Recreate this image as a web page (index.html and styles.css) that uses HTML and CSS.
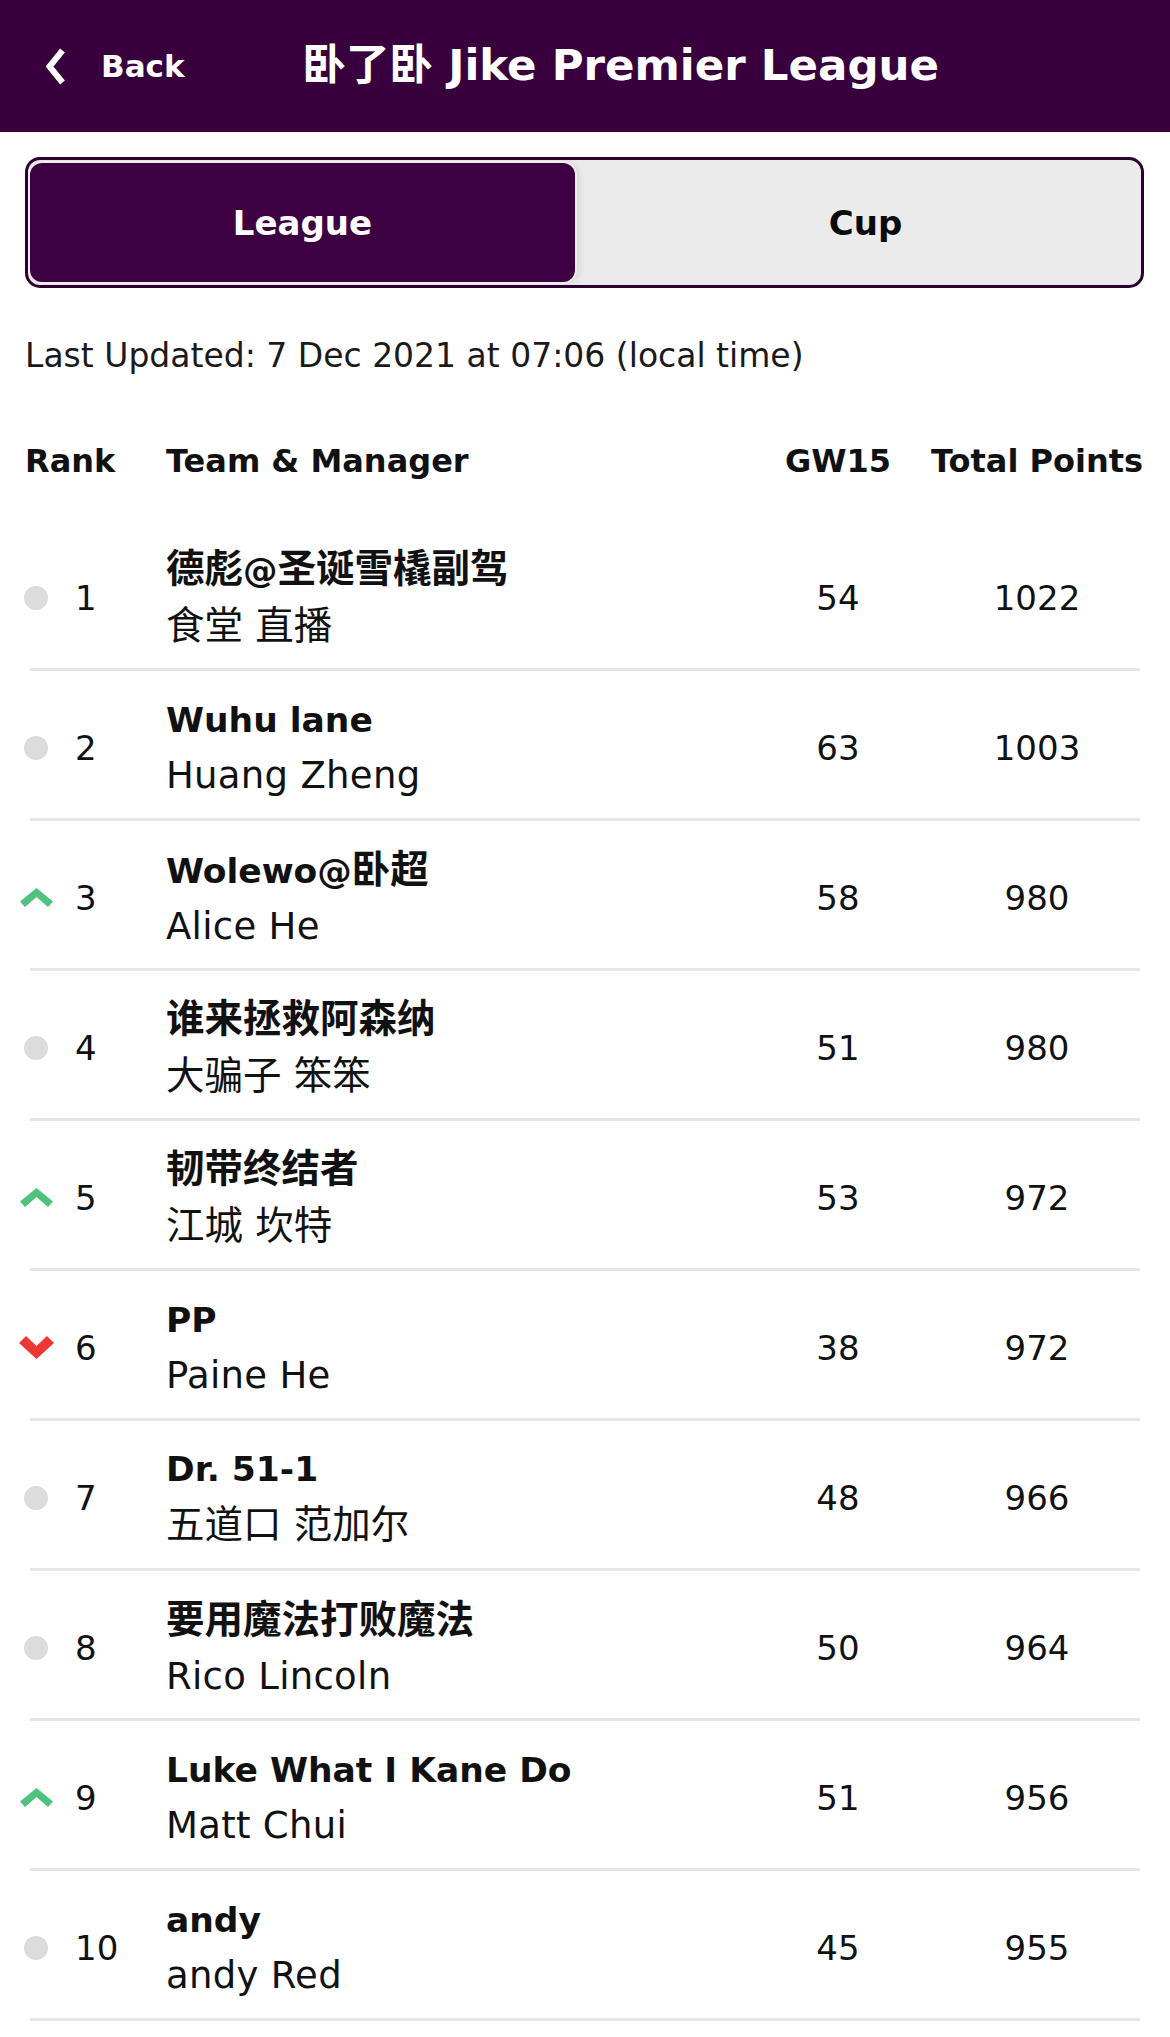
FILE: index.html
```html
<!DOCTYPE html>
<html lang="zh-CN">
<head>
<meta charset="utf-8">
<title>卧了卧 Jike Premier League</title>
<link rel="stylesheet" href="styles.css">
</head>
<body>
<header class="topbar">
  <a class="back" href="#">
    <svg class="back-icon" width="19" height="37" viewBox="0 0 19 37"><polyline points="16.5,2.5 3.5,18.5 16.5,34.5" fill="none" stroke="#fff" stroke-width="6"/></svg>
    <span>Back</span>
  </a>
  <h1 class="title">卧了卧 Jike Premier League</h1>
</header>

<main class="page">
  <div class="toggle">
    <div class="tab tab-active">League</div>
    <div class="tab tab-cup">Cup</div>
  </div>

  <p class="updated">Last Updated: 7 Dec 2021 at 07:06 (local time)</p>

  <div class="thead">
    <div class="c-rank">Rank</div>
    <div class="c-team">Team &amp; Manager</div>
    <div class="c-gw">GW15</div>
    <div class="c-tp">Total Points</div>
  </div>

  <div class="rows">
    <div class="row">
      <div class="c-rank"><span class="mv"><span class="dot"></span></span><span class="num">1</span></div>
      <div class="c-team"><div class="team"><span class="zh">德彪</span>@<span class="zh">圣诞雪橇副驾</span></div><div class="mgr"><span class="zh">食堂 直播</span></div></div>
      <div class="c-gw">54</div>
      <div class="c-tp">1022</div>
    </div>
    <div class="row">
      <div class="c-rank"><span class="mv"><span class="dot"></span></span><span class="num">2</span></div>
      <div class="c-team"><div class="team">Wuhu lane</div><div class="mgr">Huang Zheng</div></div>
      <div class="c-gw">63</div>
      <div class="c-tp">1003</div>
    </div>
    <div class="row">
      <div class="c-rank"><span class="mv"><svg width="33" height="19" viewBox="0 0 33 19"><polygon points="16.5,0 33,13.5 28,19 16.5,9 5,19 0,13.5" fill="#4fc27d"/></svg></span><span class="num">3</span></div>
      <div class="c-team"><div class="team">Wolewo@<span class="zh">卧超</span></div><div class="mgr">Alice He</div></div>
      <div class="c-gw">58</div>
      <div class="c-tp">980</div>
    </div>
    <div class="row">
      <div class="c-rank"><span class="mv"><span class="dot"></span></span><span class="num">4</span></div>
      <div class="c-team"><div class="team"><span class="zh">谁来拯救阿森纳</span></div><div class="mgr"><span class="zh">大骗子 笨笨</span></div></div>
      <div class="c-gw">51</div>
      <div class="c-tp">980</div>
    </div>
    <div class="row">
      <div class="c-rank"><span class="mv"><svg width="33" height="19" viewBox="0 0 33 19"><polygon points="16.5,0 33,13.5 28,19 16.5,9 5,19 0,13.5" fill="#4fc27d"/></svg></span><span class="num">5</span></div>
      <div class="c-team"><div class="team"><span class="zh">韧带终结者</span></div><div class="mgr"><span class="zh">江城 坎特</span></div></div>
      <div class="c-gw">53</div>
      <div class="c-tp">972</div>
    </div>
    <div class="row">
      <div class="c-rank"><span class="mv"><svg width="35" height="23" viewBox="0 0 35 23"><polygon points="0,7 7,0 17.5,10 28,0 35,7 17.5,23" fill="#ee3632"/></svg></span><span class="num">6</span></div>
      <div class="c-team"><div class="team">PP</div><div class="mgr">Paine He</div></div>
      <div class="c-gw">38</div>
      <div class="c-tp">972</div>
    </div>
    <div class="row">
      <div class="c-rank"><span class="mv"><span class="dot"></span></span><span class="num">7</span></div>
      <div class="c-team"><div class="team">Dr. 51-1</div><div class="mgr"><span class="zh">五道口 范加尔</span></div></div>
      <div class="c-gw">48</div>
      <div class="c-tp">966</div>
    </div>
    <div class="row">
      <div class="c-rank"><span class="mv"><span class="dot"></span></span><span class="num">8</span></div>
      <div class="c-team"><div class="team"><span class="zh">要用魔法打败魔法</span></div><div class="mgr">Rico Lincoln</div></div>
      <div class="c-gw">50</div>
      <div class="c-tp">964</div>
    </div>
    <div class="row">
      <div class="c-rank"><span class="mv"><svg width="33" height="19" viewBox="0 0 33 19"><polygon points="16.5,0 33,13.5 28,19 16.5,9 5,19 0,13.5" fill="#4fc27d"/></svg></span><span class="num">9</span></div>
      <div class="c-team"><div class="team">Luke What I Kane Do</div><div class="mgr">Matt Chui</div></div>
      <div class="c-gw">51</div>
      <div class="c-tp">956</div>
    </div>
    <div class="row">
      <div class="c-rank"><span class="mv"><span class="dot"></span></span><span class="num">10</span></div>
      <div class="c-team"><div class="team">andy</div><div class="mgr">andy Red</div></div>
      <div class="c-gw">45</div>
      <div class="c-tp">955</div>
    </div>
  </div>
</main>
</body>
</html>
```

FILE: styles.css
```css
* { box-sizing: border-box; }

html, body {
  margin: 0;
  padding: 0;
  background: #ffffff;
}

body {
  font-family: "DejaVu Sans", "Noto Sans CJK SC", sans-serif;
  color: #111111;
  overflow: hidden;
}

.topbar {
  height: 132px;
  background: #38003c;
  display: flex;
  align-items: center;
  padding-left: 46px;
  color: #ffffff;
}

.back {
  display: flex;
  align-items: center;
  color: #ffffff;
  text-decoration: none;
  font-weight: bold;
  font-size: 31px;
}

.back-icon {
  display: block;
  margin-right: 36px;
}

.title {
  margin: 0 0 0 118px;
  font-size: 43.5px;
  font-weight: bold;
  line-height: 1;
  white-space: nowrap;
}

.page {
  padding: 0 26px 0 25px;
}

.toggle {
  margin-top: 25px;
  height: 131px;
  border: 3px solid #2c0030;
  border-radius: 15px;
  background: #ebebeb;
  padding: 3px 3px 3px 2px;
  display: grid;
  grid-template-columns: 545px 1fr;
}

.tab {
  display: flex;
  align-items: center;
  justify-content: center;
  font-size: 34px;
  font-weight: bold;
  color: #0a0a0a;
}

.tab-cup {
  padding-left: 18px;
}

.tab-active {
  background: #3d0041;
  color: #ffffff;
  border-radius: 12px;
  box-shadow: 0 0 0 2px #f1eaf2, 3px 0 8px rgba(0, 0, 0, 0.12);
}

.updated {
  margin: 48px 0 0;
  font-size: 33px;
  line-height: 40px;
  color: #1a1a1a;
  white-space: nowrap;
}

.thead,
.row {
  display: grid;
  grid-template-columns: 141px 610px 124px 244px;
  align-items: center;
}

.thead {
  margin-top: 55px;
  height: 60px;
  margin-bottom: 30px;
  font-weight: bold;
  font-size: 32px;
  white-space: nowrap;
}

.c-gw {
  text-align: center;
}

.c-tp {
  text-align: center;
  padding-left: 30px;
}

.row {
  height: 150px;
  padding: 6px 0 3px;
  font-size: 34px;
  background: linear-gradient(#e6e6e6, #e6e6e6) no-repeat;
  background-size: calc(100% - 9px) 3px;
  background-position: 5px 100%;
}

.c-rank {
  display: flex;
  align-items: center;
}

.thead .c-rank {
  display: block;
}

.mv {
  width: 22px;
  display: flex;
  justify-content: center;
  align-items: center;
}

.mv svg {
  display: block;
  flex: none;
}

.dot {
  flex: none;
  width: 24px;
  height: 24px;
  border-radius: 50%;
  background: #dcdcdc;
}

.num {
  margin-left: 28px;
  font-size: 34px;
}

.team {
  font-weight: bold;
  font-size: 34.5px;
  line-height: 55px;
  white-space: nowrap;
}

.mgr {
  font-size: 37px;
  line-height: 55px;
  letter-spacing: 0.3px;
  white-space: nowrap;
}

.zh {
  font-size: 38.5px;
  letter-spacing: 0;
}
```
